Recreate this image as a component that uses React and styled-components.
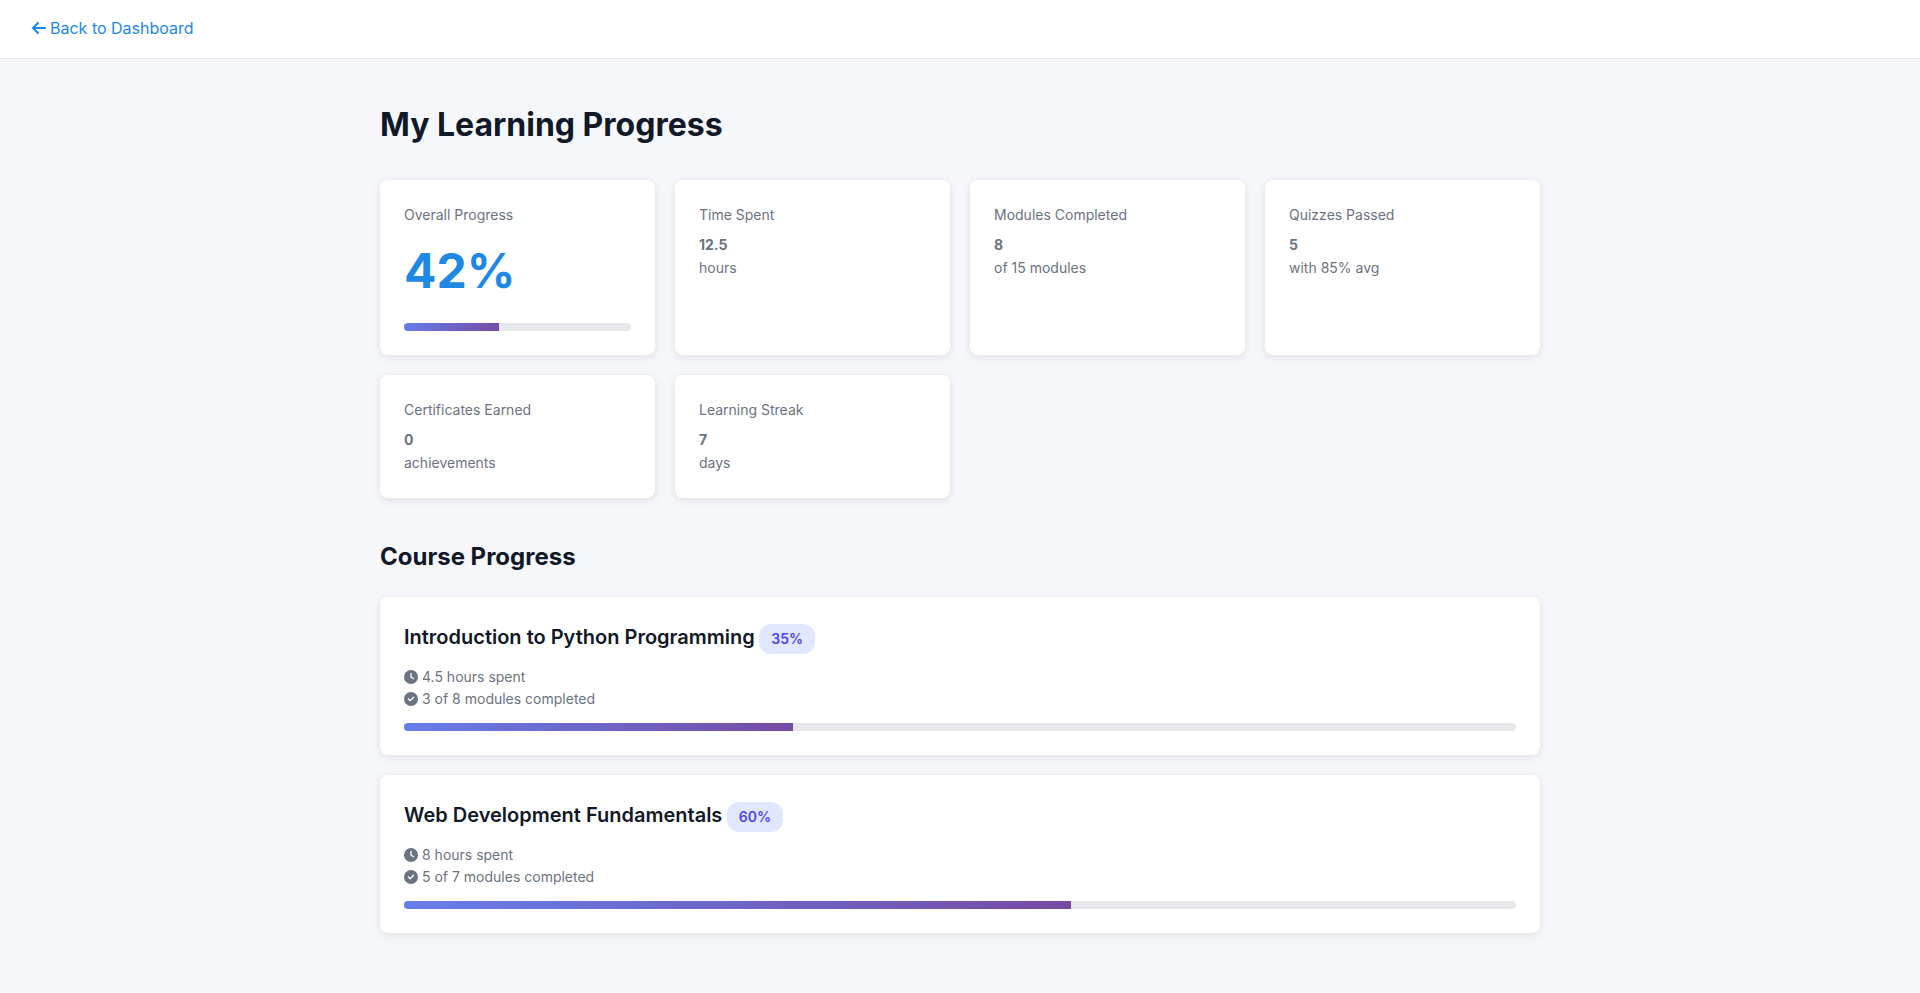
import React from 'react';
import styled, { createGlobalStyle } from 'styled-components';
import { FaArrowLeft, FaClock, FaCircleCheck } from 'react-icons/fa6';

const GlobalStyle = createGlobalStyle`
  *, *::before, *::after { box-sizing: border-box; }
  body {
    margin: 0;
    background: #f5f7fb;
    color: #111827;
    font-family: Inter, "Liberation Sans", sans-serif;
    font-size: 16px;
    line-height: 24px;
  }
  h1, h2, h3, p, ul, dl, dd { margin: 0; padding: 0; }
  ul { list-style: none; }
`;

const TopBar = styled.header`
  display: flex;
  padding: 16px 32px 18px;
  background: #ffffff;
  border-bottom: 1px solid #e5e7eb;
`;

const BackLink = styled.a`
  display: inline-flex;
  align-items: center;
  gap: 4px;
  color: #1e88e5;
  text-decoration: none;

  svg {
    width: 14px;
    height: 16px;
  }
`;

const Main = styled.main`
  max-width: 1200px;
  margin: 0 auto;
  padding: 40px 20px;
`;

const PageTitle = styled.h1`
  margin-bottom: 30px;
  font-size: 32px;
  font-weight: 700;
  line-height: 51px;
`;

const SectionTitle = styled.h2`
  margin-bottom: 21px;
  font-size: 24px;
  font-weight: 700;
  line-height: 38px;
`;

const StatGrid = styled.section`
  display: grid;
  grid-template-columns: repeat(auto-fit, minmax(250px, 1fr));
  gap: 20px;
  margin-bottom: 40px;
`;

const Card = styled.article`
  padding: 24px;
  background: #ffffff;
  border-radius: 8px;
  box-shadow: 0 2px 8px rgba(0, 0, 0, 0.1);
`;

const StatLabel = styled.p`
  margin-bottom: 8px;
  color: #6b7280;
  font-size: 14px;
  line-height: 22px;
`;

const StatDetail = styled.div`
  display: flex;
  flex-direction: column;
  gap: 1px;
  color: #6b7280;
  font-size: 14px;
  line-height: 22px;
`;

const StatValue = styled.strong`
  font-weight: 700;
`;

const BigValue = styled.p`
  padding-bottom: 2px;
  color: #1e88e5;
  font-size: 48px;
  font-weight: 700;
  line-height: 74px;
`;

const Track = styled.div`
  height: 8px;
  margin-top: 13px;
  overflow: hidden;
  background: #e5e7eb;
  border-radius: 4px;
`;

const Fill = styled.div`
  height: 100%;
  background: linear-gradient(135deg, #667eea 0%, #764ba2 100%);
`;

const CourseList = styled.div`
  display: flex;
  flex-direction: column;
  gap: 20px;
`;

const CourseHeader = styled.div`
  margin-bottom: 12px;
`;

const CourseTitle = styled.h3`
  display: inline;
  font-size: 20px;
  font-weight: 600;
  line-height: 32px;
`;

const Badge = styled.span`
  display: inline-block;
  padding: 4px 12px;
  background: #e0e7ff;
  border-radius: 12px;
  color: #4f46e5;
  font-size: 14px;
  font-weight: 600;
  line-height: 22px;
`;

const CourseFacts = styled.ul`
  color: #6b7280;
  font-size: 14px;
  line-height: 22px;
`;

const Fact = styled.li`
  display: flex;
  align-items: center;
  gap: 4px;
`;

const stats = [
  { label: 'Time Spent', value: '12.5', note: 'hours' },
  { label: 'Modules Completed', value: '8', note: 'of 15 modules' },
  { label: 'Quizzes Passed', value: '5', note: 'with 85% avg' },
  { label: 'Certificates Earned', value: '0', note: 'achievements' },
  { label: 'Learning Streak', value: '7', note: 'days' },
];

const courses = [
  { title: 'Introduction to Python Programming', percent: 35, hours: '4.5', done: 3, total: 8 },
  { title: 'Web Development Fundamentals', percent: 60, hours: '8', done: 5, total: 7 },
];

function ProgressBar({ percent, label }) {
  return (
    <Track role="progressbar" aria-label={label} aria-valuenow={percent} aria-valuemin={0} aria-valuemax={100}>
      <Fill style={{ width: `${percent}%` }} />
    </Track>
  );
}

function StatCard({ label, value, note }) {
  return (
    <Card>
      <StatLabel>{label}</StatLabel>
      <StatDetail>
        <StatValue>{value}</StatValue>
        <span>{note}</span>
      </StatDetail>
    </Card>
  );
}

function CourseCard({ title, percent, hours, done, total }) {
  return (
    <Card>
      <CourseHeader>
        <CourseTitle>{title}</CourseTitle>{' '}
        <Badge>{percent}%</Badge>
      </CourseHeader>
      <CourseFacts>
        <Fact><FaClock aria-hidden="true" /><span>{hours} hours spent</span></Fact>
        <Fact><FaCircleCheck aria-hidden="true" /><span>{done} of {total} modules completed</span></Fact>
      </CourseFacts>
      <ProgressBar percent={percent} label={title} />
    </Card>
  );
}

export default function App() {
  return (
    <>
      <GlobalStyle />
      <TopBar>
        <BackLink href="#dashboard">
          <FaArrowLeft aria-hidden="true" />
          <span>Back to Dashboard</span>
        </BackLink>
      </TopBar>
      <Main>
        <PageTitle>My Learning Progress</PageTitle>
        <StatGrid>
          <Card>
            <StatLabel>Overall Progress</StatLabel>
            <BigValue>42%</BigValue>
            <ProgressBar percent={42} label="Overall Progress" />
          </Card>
          {stats.map((stat) => <StatCard key={stat.label} {...stat} />)}
        </StatGrid>
        <SectionTitle>Course Progress</SectionTitle>
        <CourseList>
          {courses.map((course) => <CourseCard key={course.title} {...course} />)}
        </CourseList>
      </Main>
    </>
  );
}
